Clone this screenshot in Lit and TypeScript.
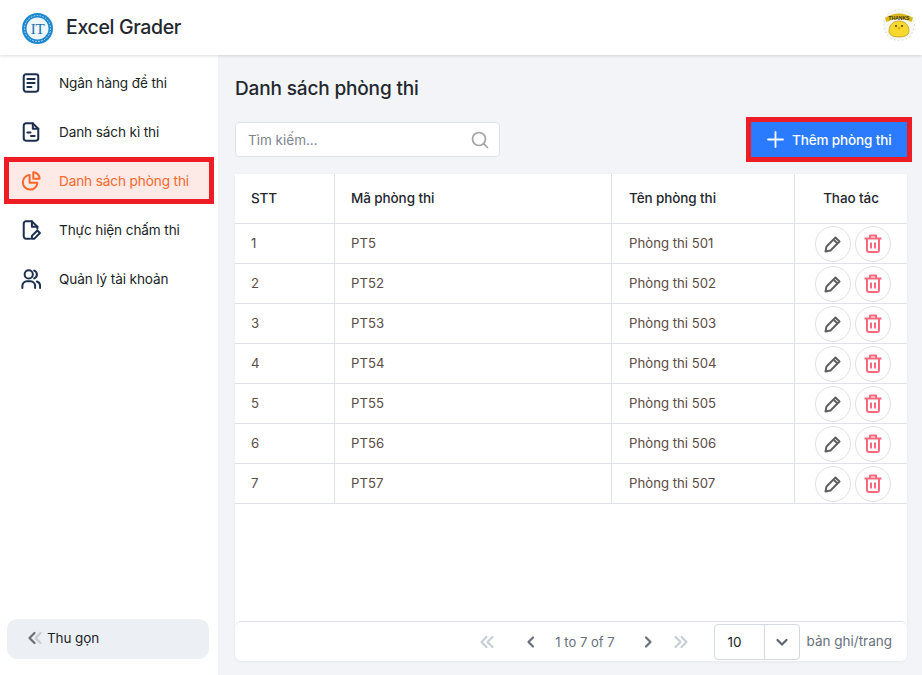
import { LitElement, html, css, svg } from 'lit';
import { customElement } from 'lit/decorators.js';

const rooms = [
  ['1', 'PT5', 'Phòng thi 501'],
  ['2', 'PT52', 'Phòng thi 502'],
  ['3', 'PT53', 'Phòng thi 503'],
  ['4', 'PT54', 'Phòng thi 504'],
  ['5', 'PT55', 'Phòng thi 505'],
  ['6', 'PT56', 'Phòng thi 506'],
  ['7', 'PT57', 'Phòng thi 507'],
];

const navIcons = {
  doc: svg`<rect x="3" y="1.500" width="16" height="19" rx="2.500"/><path d="M7 6.500h8M7 11h8M7 15.500h4.500"/>`,
  file: svg`<path d="M13 1.500H5.500A2.500 2.500 0 0 0 3 4v14a2.500 2.500 0 0 0 2.500 2.500h11A2.500 2.500 0 0 0 19 18V7.500z"/><path d="M13 1.500V7.500h6M7 11.500h3.500M11 15.500h4"/>`,
  pie: svg`<path d="M9.500 4.500a8 8 0 1 0 8.500 8.500h-8.500z"/><path d="M13.500 1.500a7 7 0 0 1 7 7h-7z"/>`,
  edit: svg`<path d="M10 20.500H5.500A2.500 2.500 0 0 1 3 18V4a2.500 2.500 0 0 1 2.500-2.500H12l6 6v2"/><path d="M12 1.500v6h6"/><path d="M12 20.500v-3l6-6 2.800 2.800-6 6.200z"/>`,
  users: svg`<circle cx="8.500" cy="6" r="4.500"/><path d="M1.500 21v-2.500a5 5 0 0 1 5-5h4a5 5 0 0 1 5 5V21"/><path d="M14.500 1.800a4.500 4.500 0 0 1 0 8.500M17.500 13.800a5 5 0 0 1 3.500 4.700V21"/>`,
};

const navItems: [keyof typeof navIcons, string, boolean][] = [
  ['doc', 'Ngân hàng đề thi', false],
  ['file', 'Danh sách kì thi', false],
  ['pie', 'Danh sách phòng thi', true],
  ['edit', 'Thực hiện chấm thi', false],
  ['users', 'Quản lý tài khoản', false],
];

@customElement('app-root')
export class AppRoot extends LitElement {
  static styles = css`
    :host {
      display: flex;
      flex-direction: column;
      width: 922px;
      height: 675px;
      overflow: hidden;
      background: #f2f4f8;
      font-family: Inter, 'Noto Sans', sans-serif;
      font-size: 14px;
      color: #1b1f26;
    }
    .header {
      position: relative;
      z-index: 2;
      flex: none;
      height: 55px;
      display: flex;
      align-items: center;
      justify-content: space-between;
      padding: 0 7px 0 22px;
      background: #fff;
      box-shadow: 0 1px 3px rgba(0, 0, 0, 0.14);
    }
    .brand {
      display: flex;
      align-items: center;
      gap: 13px;
      font-size: 19.500px;
      font-weight: 500;
      color: #23272e;
      letter-spacing: -0.35px;
    }
    .brand span {
      margin-top: -2px;
    }
    .avatar {
      margin-bottom: 5px;
    }
    .body {
      flex: 1;
      display: flex;
      min-height: 0;
    }
    .sidebar {
      flex: none;
      width: 218px;
      box-sizing: border-box;
      padding: 9px 9px 16px;
      background: #fff;
      display: flex;
      flex-direction: column;
    }
    .nav {
      flex: 1;
      display: flex;
      flex-direction: column;
      gap: 12px;
    }
    .nav-item {
      height: 37px;
      display: flex;
      align-items: center;
      gap: 18px;
      padding-left: 12px;
      white-space: nowrap;
      font-size: 13.600px;
      letter-spacing: -0.12px;
    }
    .nav-item svg {
      flex: none;
      fill: none;
      stroke: #1d2f4f;
      stroke-width: 2.200;
      stroke-linecap: round;
      stroke-linejoin: round;
    }
    .nav-item.active {
      background: #fde9e6;
      color: #f9682a;
      outline: 5px solid #ee1c25;
    }
    .nav-item.active svg {
      stroke: #f9682a;
    }
    .collapse {
      height: 40px;
      box-sizing: border-box;
      margin-left: -2px;
      display: flex;
      align-items: center;
      gap: 4px;
      padding: 0 0 2px 20px;
      background: #eceff4;
      border-radius: 10px;
      font-size: 13.500px;
      letter-spacing: -0.1px;
    }
    .collapse svg {
      fill: none;
      stroke-width: 2.200;
      stroke-linecap: round;
      stroke-linejoin: round;
    }
    .main {
      flex: 1;
      min-width: 0;
      display: flex;
      flex-direction: column;
      padding: 21px 15px 14px 17px;
    }
    h1 {
      margin: 0;
      font-size: 19px;
      line-height: 25px;
      font-weight: 500;
      color: #23272e;
      letter-spacing: -0.15px;
    }
    .toolbar {
      display: flex;
      align-items: center;
      justify-content: space-between;
      margin: 21px 0 17px;
    }
    .search {
      width: 265px;
      height: 35px;
      box-sizing: border-box;
      display: flex;
      align-items: center;
      justify-content: space-between;
      padding: 0 10px 0 12px;
      background: #fff;
      border: 1px solid #dfe2e8;
      border-radius: 4px;
      color: #7d8592;
      font-size: 13.500px;
    }
    .add {
      width: 156px;
      height: 35px;
      box-sizing: border-box;
      display: flex;
      align-items: center;
      gap: 8px;
      padding-left: 16px;
      background: #2b7bff;
      color: #fff;
      font-weight: 500;
      font-size: 13.500px;
      outline: 5px solid #ee1c25;
      white-space: nowrap;
      letter-spacing: -0.12px;
    }
    .card {
      flex: 1;
      min-height: 0;
      display: flex;
      flex-direction: column;
      background: #fff;
      border-radius: 0 0 6px 6px;
      box-shadow: 0 1px 3px rgba(30, 40, 70, 0.06);
    }
    .table {
      flex: 1;
      display: grid;
      grid-template-columns: 100px 277px 183px 112px;
      grid-template-rows: 50px;
      grid-auto-rows: 40px;
      align-content: start;
    }
    .cell {
      display: flex;
      align-items: center;
      padding: 0 0 1px 16px;
      box-sizing: border-box;
      border-bottom: 1px solid #dfe2e8;
      border-right: 1px solid #dfe2e8;
      color: #5d4b46;
      font-size: 13.200px;
    }
    .cell:nth-child(4n) {
      border-right: none;
    }
    .cell:nth-child(4n + 3) {
      padding-left: 17px;
    }
    .head {
      color: #23272e;
      font-weight: 500;
      font-size: 13.500px;
      letter-spacing: -0.1px;
    }
    .center {
      justify-content: center;
      padding-left: 0;
    }
    .actions {
      gap: 4px;
      padding: 0 0 0 4px;
    }
    .round {
      width: 36px;
      height: 36px;
      box-sizing: border-box;
      display: flex;
      align-items: center;
      justify-content: center;
      border: 1px solid #e1e1e1;
      border-radius: 50%;
      background: #fff;
    }
    .footer {
      flex: none;
      height: 40px;
      box-sizing: border-box;
      display: flex;
      align-items: center;
      justify-content: flex-end;
      padding-right: 15px;
      border-top: 1px solid #dfe2e8;
      border-radius: 6px 6px 0 0;
      color: #68707c;
      font-size: 13.500px;
      white-space: nowrap;
    }
    .footer svg {
      flex: none;
      fill: none;
      stroke-linecap: round;
      stroke-linejoin: round;
      stroke-width: 2.200;
    }
    .pager {
      display: flex;
      align-items: center;
    }
    .first {
      margin-right: 28px;
    }
    .count {
      margin: 0 25px 0 16px;
      font-size: 13px;
    }
    .last {
      margin-left: 17px;
    }
    .size {
      display: flex;
      align-items: stretch;
      width: 86px;
      height: 36px;
      box-sizing: border-box;
      margin: 0 7px 0 25px;
      border: 1px solid #d5d9e0;
      border-radius: 4px;
      color: #1b1f26;
    }
    .size-value {
      flex: 1;
      display: flex;
      align-items: center;
      padding-left: 13px;
      border-right: 1px solid #d5d9e0;
    }
    .size-arrow {
      width: 34px;
      display: flex;
      align-items: center;
      justify-content: center;
    }
    .per-page {
      padding-bottom: 1px;
    }
  `;

  private chevrons(dir: 'left' | 'right', double: boolean, color: string, back = color, cls = '') {
    const flip = dir === 'right' ? 'scale(-1 1) translate(-16 0)' : '';
    return html`<svg class=${cls} width="16" height="16" viewBox="0 0 16 16" style="stroke:${color}">
      <g transform=${flip}>
        ${double
          ? svg`<path d="M7.500 3 2.500 8l5 5"/><path d="M13.500 3 8.500 8l5 5" style="stroke:${back}"/>`
          : svg`<path d="M10 3.500 5.500 8l4.500 4.500"/>`}
      </g>
    </svg>`;
  }

  private logo() {
    return html`<svg width="31" height="31" viewBox="0 0 31 31" style="margin-top:1px">
      <circle cx="15.500" cy="15.500" r="15.500" fill="#1e88cf" />
      <circle cx="15.500" cy="15.500" r="11" fill="#eef6fc" />
      <circle cx="15.500" cy="15.500" r="13" fill="none" stroke="#cfe6f6" stroke-width="1" stroke-dasharray="1.500 1.500" />
      <text x="15.500" y="20.500" text-anchor="middle" font-family="'Liberation Serif', serif" font-size="15" fill="#1c6fae">IT</text>
    </svg>`;
  }

  private avatar() {
    return html`<svg class="avatar" width="32" height="32" viewBox="0 0 32 32">
      <circle cx="16" cy="16" r="15.500" fill="#f7f7f1" stroke="#cfcfc6" stroke-width="1" stroke-dasharray="1 3" />
      <path d="M2 9 Q16 0 30 9 L28.500 13 Q16 6 3.500 13 Z" fill="#d9b81a" />
      <text x="16" y="10.500" text-anchor="middle" font-family="'Liberation Sans', sans-serif" font-size="5" font-weight="700" fill="#3b3210">THANKS</text>
      <path d="M6 22c0-6 4-10 10-10s10 4 10 10c0 4-4 6-10 6s-10-2-10-6z" fill="#f6d92c" stroke="#a98a12" stroke-width="0.600" />
      <circle cx="13" cy="17" r="0.900" fill="#3a2c10" />
      <circle cx="19" cy="17" r="0.900" fill="#3a2c10" />
      <path d="M14.500 18.500h3L16 20.500z" fill="#e08a1c" />
    </svg>`;
  }

  render() {
    return html`
      <header class="header">
        <div class="brand">${this.logo()}<span>Excel Grader</span></div>
        ${this.avatar()}
      </header>
      <div class="body">
        <aside class="sidebar">
          <nav class="nav">
            ${navItems.map(
              ([icon, label, active]) => html`
                <div class="nav-item ${active ? 'active' : ''}">
                  <svg width="20" height="22" viewBox="0 0 22 22">${navIcons[icon]}</svg>
                  <span>${label}</span>
                </div>
              `
            )}
          </nav>
          <div class="collapse">
            ${this.chevrons('left', true, '#6b6f76', '#c9ccd1')}
            <span>Thu gọn</span>
          </div>
        </aside>
        <main class="main">
          <h1>Danh sách phòng thi</h1>
          <div class="toolbar">
            <div class="search">
              <span>Tìm kiếm...</span>
              <svg width="18" height="18" viewBox="0 0 18 18" fill="none" stroke="#a3a3a3" stroke-width="1.700" stroke-linecap="round">
                <circle cx="8" cy="8" r="6.500" /><path d="m13 13 3.500 3.500" />
              </svg>
            </div>
            <div class="add">
              <svg width="17" height="17" viewBox="0 0 17 17" stroke="#fff" stroke-width="1.800" stroke-linecap="round">
                <path d="M8.500 1v15M1 8.500h15" />
              </svg>
              <span>Thêm phòng thi</span>
            </div>
          </div>
          <section class="card">
            <div class="table">
              <div class="cell head">STT</div>
              <div class="cell head">Mã phòng thi</div>
              <div class="cell head">Tên phòng thi</div>
              <div class="cell head center">Thao tác</div>
              ${rooms.map(
                ([no, code, name]) => html`
                  <div class="cell">${no}</div>
                  <div class="cell">${code}</div>
                  <div class="cell">${name}</div>
                  <div class="cell center actions">
                    <span class="round">
                      <svg width="18" height="18" viewBox="0 0 18 18" fill="none" stroke="#5f5f5f" stroke-width="2" stroke-linejoin="round">
                        <path d="M1.500 16.500l1-5L11.500 2.500l4 4-9 9z" /><path d="M9.500 4.500l4 4" />
                      </svg>
                    </span>
                    <span class="round">
                      <svg width="18" height="19" viewBox="0 0 18 19" fill="none" stroke="#f8697f" stroke-width="2" stroke-linejoin="round">
                        <path d="M0.500 4.500h17M6 4.500V1.500h6v3" /><path d="M3 4.500v11.500a2 2 0 0 0 2 2h8a2 2 0 0 0 2-2V4.500" /><path d="M7 8.500v6M11 8.500v6" />
                      </svg>
                    </span>
                  </div>
                `
              )}
            </div>
            <div class="footer">
              <div class="pager">
                ${this.chevrons('left', true, '#c9ced6', '#c9ced6', 'first')}
                ${this.chevrons('left', false, '#68707c')}
                <span class="count">1 to 7 of 7</span>
                ${this.chevrons('right', false, '#68707c')}
                ${this.chevrons('right', true, '#c9ced6', '#c9ced6', 'last')}
              </div>
              <div class="size">
                <span class="size-value">10</span>
                <span class="size-arrow">
                  <svg width="14" height="14" viewBox="0 0 14 14" style="stroke:#5f6670"><path d="M2.500 5 7 9.500 11.500 5" /></svg>
                </span>
              </div>
              <span class="per-page">bản ghi/trang</span>
            </div>
          </section>
        </main>
      </div>
    `;
  }
}
